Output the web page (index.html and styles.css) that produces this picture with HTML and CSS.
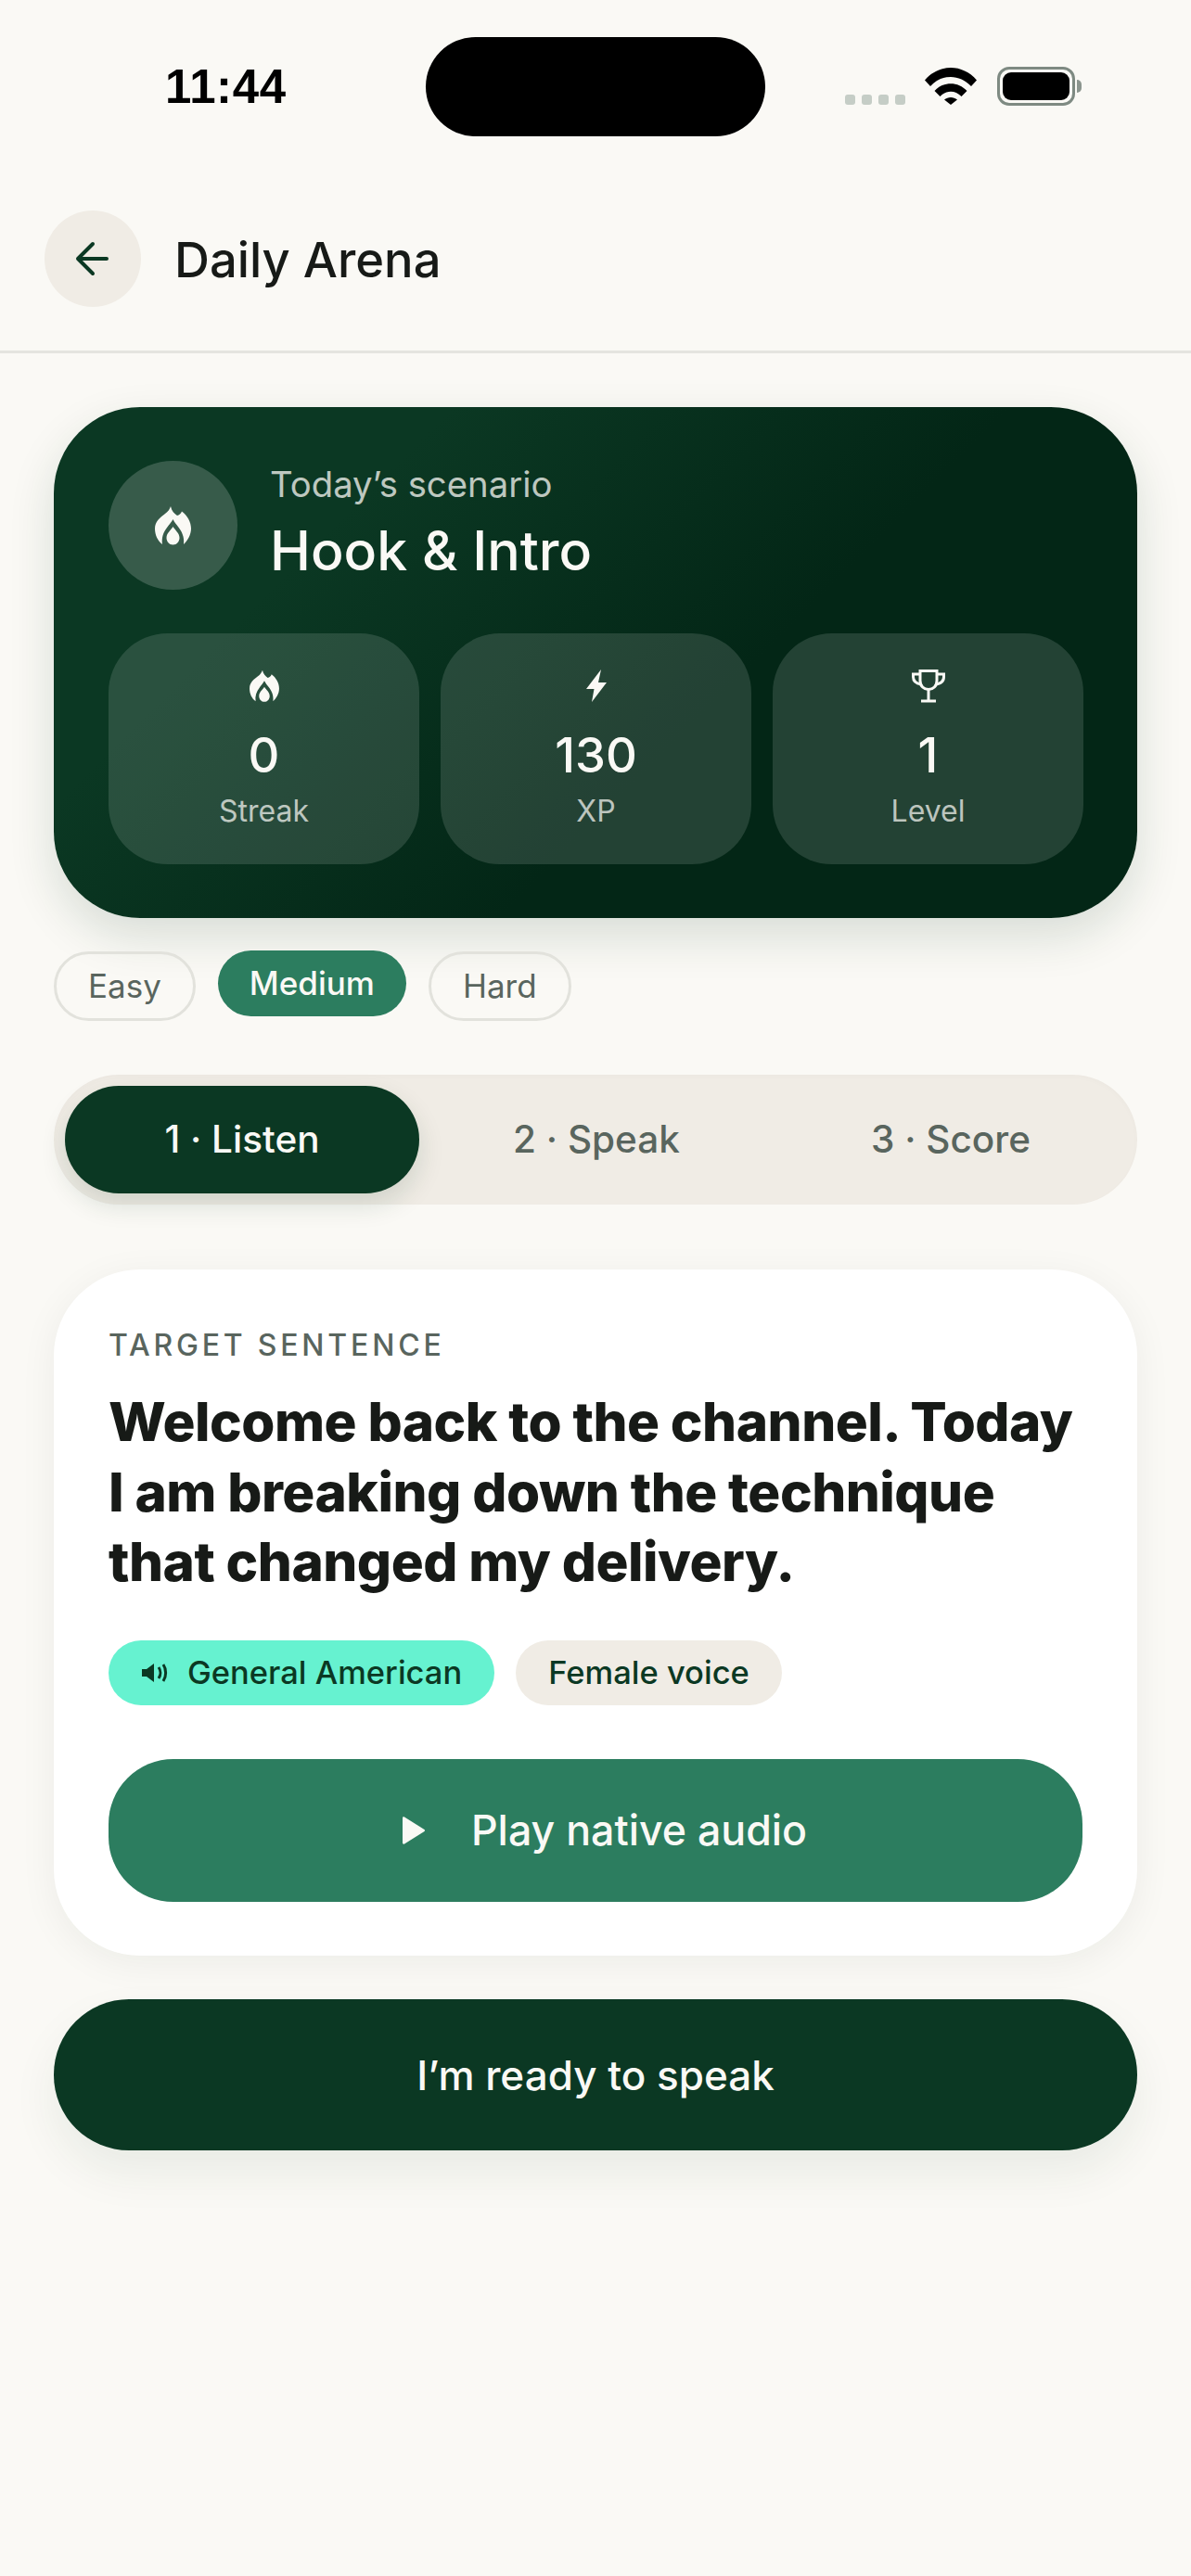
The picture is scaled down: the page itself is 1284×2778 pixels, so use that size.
FILE: index.html
```html
<!DOCTYPE html>
<html lang="en">
<head>
<meta charset="utf-8">
<title>Daily Arena</title>
<link rel="stylesheet" href="styles.css">
</head>
<body>
<div class="screen">
  <div class="status">
    <span class="time">11:44</span>
    <div class="island"></div>
    <div class="status-icons">
      <div class="dots"><i></i><i></i><i></i><i></i></div>
      <svg class="wifi" width="56" height="41" viewBox="0 0 56 41"><path d="M0 14.500C15 -3.500 41 -3.500 56 14.500L50 21C37.500 7.500 18.500 7.500 6 21Z"/><path d="M10.500 26C20 15.500 36 15.500 45.500 26L39.500 32C32.500 25 23.500 25 16.500 32Z"/><path d="M21 35.500C25 32 31 32 35 35.500L28 41Z"/></svg>
      <div class="battery"><div class="battery-fill"></div></div>
    </div>
  </div>
  <header class="topbar">
    <button class="back">
      <svg width="44" height="44" viewBox="0 0 44 44" fill="none" stroke="#0b3823" stroke-width="4" stroke-linecap="round" stroke-linejoin="round"><path d="M37 22H6M22 6L6 22L22 38"/></svg>
    </button>
    <h1 class="title">Daily Arena</h1>
  </header>
  <main class="content">
    <section class="hero">
      <div class="hero-head">
        <div class="hero-icon">
          <svg width="39" height="42" viewBox="0 0 39 42"><path class="flame" d="M17 0C18 5 21 8 24 10C26 9.500 28 8 29 5.500C35 10 39 17 39 24C39 31 35 37 31 41C32 33 29 27 25 22C23 19.500 21 17 19.500 14C18 17 15 20 13 23C9 28 7 34 8 41C3 37 0 31 0 24C0 16 6 12 11 8C14 6 16 3 17 0Z"/><path class="flame" d="M19.500 22C22 26 26.500 29 26.500 34C26.500 38 23.500 41.500 19.500 41.500C15.500 41.500 12.500 38 12.500 34C12.500 29 17 26 19.500 22Z"/></svg>
        </div>
        <div class="hero-text">
          <div class="hero-sub">Today’s scenario</div>
          <div class="hero-title">Hook &amp; Intro</div>
        </div>
      </div>
      <div class="stats">
        <div class="stat">
          <svg class="stat-icon" width="36" height="36" viewBox="-2 -1 43 44"><path class="flame" d="M17 0C18 5 21 8 24 10C26 9.500 28 8 29 5.500C35 10 39 17 39 24C39 31 35 37 31 41C32 33 29 27 25 22C23 19.500 21 17 19.500 14C18 17 15 20 13 23C9 28 7 34 8 41C3 37 0 31 0 24C0 16 6 12 11 8C14 6 16 3 17 0Z"/><path class="flame" d="M19.500 22C22 26 26.500 29 26.500 34C26.500 38 23.500 41.500 19.500 41.500C15.500 41.500 12.500 38 12.500 34C12.500 29 17 26 19.500 22Z"/></svg>
          <div class="stat-num">0</div>
          <div class="stat-label">Streak</div>
        </div>
        <div class="stat">
          <svg class="stat-icon" width="36" height="36" viewBox="0 0 36 36"><path class="flame" d="M23 0L7 21H15.500L13 35L29 14H20Z"/></svg>
          <div class="stat-num">130</div>
          <div class="stat-label">XP</div>
        </div>
        <div class="stat">
          <svg class="stat-icon" width="36" height="36" viewBox="0 0 36 36" fill="none" stroke="#faf9f5" stroke-width="3"><path d="M9 1.500H27V12C27 18 23 21.500 18 21.500C13 21.500 9 18 9 12Z"/><path d="M9 5H1.500V8C1.500 12 4 15 10 16M27 5H34.500V8C34.500 12 32 15 26 16M18 21.500V33M10 34H26"/></svg>
          <div class="stat-num">1</div>
          <div class="stat-label">Level</div>
        </div>
      </div>
    </section>
    <div class="levels">
      <span class="level">Easy</span>
      <span class="level level-on">Medium</span>
      <span class="level">Hard</span>
    </div>
    <nav class="steps">
      <div class="step step-on">1 · Listen</div>
      <div class="step">2 · Speak</div>
      <div class="step">3 · Score</div>
    </nav>
    <section class="card">
      <div class="card-label">TARGET SENTENCE</div>
      <p class="sentence">Welcome back to the channel. Today I am breaking down the technique that changed my delivery.</p>
      <div class="tags">
        <span class="tag tag-accent">
          <svg width="30" height="24" viewBox="0 0 30 24"><path fill="#0b3823" d="M1 8H6L14 2V22L6 16H1Z"/><path fill="none" stroke="#0b3823" stroke-width="3" d="M19 6C21.500 9.500 21.500 14.500 19 18M24 3C27.500 8 27.500 16 24 21"/></svg>
          General American
        </span>
        <span class="tag">Female voice</span>
      </div>
      <button class="play">
        <svg width="50" height="30" viewBox="0 0 50 30"><path fill="#faf9f5" d="M20 1.500C20 .5 21 0 22 .5L43.500 14C44.200 14.500 44.200 15.500 43.500 16L22 29.500C21 30 20 29.500 20 28.500Z"/></svg>
        <span>Play native audio</span>
      </button>
    </section>
    <button class="ready">I’m ready to speak</button>
  </main>
</div>
</body>
</html>
```
FILE: styles.css
```css
* { box-sizing: border-box; }
html, body { margin: 0; padding: 0; }
body {
  width: 1284px;
  height: 2778px;
  background: #faf9f5;
  font-family: "Inter", "Noto Sans", sans-serif;
  color: #171a17;
  overflow: hidden;
}
.screen { width: 1284px; height: 2778px; }

.status {
  height: 187px;
  padding: 40px 0 0 178px;
  display: flex;
  align-items: flex-start;
}
.time {
  width: 281px;
  margin-top: 28px;
  font-family: "Liberation Sans", sans-serif;
  font-size: 51px;
  line-height: 52px;
  font-weight: 700;
  letter-spacing: 0.600px;
  color: #000;
}
.island { width: 366px; height: 107px; border-radius: 54px; background: #000; }
.status-icons { margin: 31px 0 0 86px; display: flex; align-items: flex-end; height: 44px; }
.dots { display: flex; gap: 7px; margin-right: 21px; margin-bottom: 2px; }
.dots i { width: 11px; height: 11px; border-radius: 3px; background: #c5cdc6; display: block; }
.wifi { fill: #000; margin-right: 22px; margin-bottom: 2px; }
.battery {
  position: relative;
  width: 84px;
  height: 42px;
  border: 3px solid #7e8a82;
  border-radius: 13px;
  padding: 3px;
  margin-bottom: 1px;
}
.battery::after {
  content: "";
  position: absolute;
  right: -10px;
  top: 11px;
  width: 5px;
  height: 14px;
  background: #8b958e;
  border-radius: 0 5px 5px 0;
}
.battery-fill { width: 100%; height: 100%; border-radius: 9px; background: #000; }

.topbar {
  height: 194px;
  padding: 40px 48px 0;
  display: flex;
  align-items: flex-start;
  gap: 36px;
  border-bottom: 3px solid #e4e4df;
}
.back {
  width: 104px;
  height: 104px;
  border: 0;
  padding: 0;
  border-radius: 50%;
  background: #f0ece5;
  display: flex;
  align-items: center;
  justify-content: center;
}
.title {
  margin: 0;
  height: 104px;
  font-size: 52.500px;
  line-height: 106px;
  font-weight: 500;
  color: #171a17;
}

.content { padding: 58px 58px 0; }

.hero {
  height: 551px;
  padding: 58px 59px;
  border-radius: 93px;
  background: linear-gradient(135deg, #0b3823 25%, #032616 60%);
  box-shadow: 0 20px 50px rgba(11, 56, 35, 0.14);
}
.hero-head { display: flex; gap: 35px; align-items: center; height: 139px; }
.hero-icon {
  width: 139px;
  height: 139px;
  border-radius: 50%;
  background: rgba(255, 255, 255, 0.18);
  display: flex;
  align-items: center;
  justify-content: center;
}
.flame { fill: #faf9f5; }
.hero-sub { font-size: 38.300px; line-height: 52px; color: rgba(250, 249, 245, 0.75); margin-top: -7px; }
.hero-title { font-size: 59px; line-height: 72px; font-weight: 500; color: #faf9f5; margin-top: 10px; }
.stats { display: grid; grid-template-columns: repeat(3, 335px); gap: 23px; margin-top: 47px; }
.stat {
  height: 249px;
  border-radius: 64px;
  background: rgba(255, 255, 255, 0.13);
  padding-top: 39px;
  display: flex;
  flex-direction: column;
  align-items: center;
  color: #faf9f5;
}
.stat-num { font-size: 52.500px; line-height: 62px; font-weight: 500; margin-top: 25px; }
.stat-label { font-size: 32px; line-height: 44px; color: rgba(250, 249, 245, 0.72); margin-top: 8px; }

.levels { display: flex; gap: 24px; margin-top: 35px; align-items: flex-start; }
.level {
  height: 75px;
  padding: 0 34px;
  border: 3px solid #e2e2dc;
  border-radius: 38px;
  font-size: 35px;
  line-height: 69px;
  color: #59655e;
  margin-top: 1px;
}
.level-on {
  height: 71px;
  line-height: 70px;
  border: 0;
  margin-top: 0;
  background: #2c7d5f;
  color: #faf9f5;
  font-weight: 500;
}

.steps {
  height: 140px;
  margin-top: 58px;
  padding: 12px;
  border-radius: 70px;
  background: #f0ece5;
  display: grid;
  grid-template-columns: repeat(3, 382px);
  gap: 0;
  box-shadow: inset 0 2px 6px rgba(0, 0, 0, 0.02);
}
.step {
  height: 116px;
  line-height: 116px;
  text-align: center;
  font-size: 40.500px;
  font-weight: 500;
  color: #59655e;
  border-radius: 58px;
}
.step-on {
  background: #0b3823;
  color: #faf9f5;
  box-shadow: 0 12px 28px rgba(11, 56, 35, 0.14);
}

.card {
  height: 740px;
  margin-top: 70px;
  padding: 62px 59px 0;
  border-radius: 93px;
  background: #fff;
  box-shadow: 0 8px 40px rgba(23, 26, 23, 0.06);
}
.card-label {
  font-size: 32px;
  line-height: 40px;
  font-weight: 500;
  letter-spacing: 3.800px;
  color: #59655e;
}
.sentence {
  margin: 24px 0 0;
  font-size: 58.400px;
  line-height: 75.500px;
  font-weight: 800;
  letter-spacing: -0.500px;
  color: #171a17;
}
.tags { display: flex; gap: 23px; margin-top: 47px; }
.tag {
  height: 70px;
  padding: 0 35px;
  border-radius: 35px;
  background: #f0ece5;
  font-size: 34.500px;
  font-weight: 500;
  line-height: 70px;
  color: #0b3823;
  display: inline-flex;
  align-items: center;
  gap: 20px;
}
.tag-accent { background: #66f2d0; }
.play {
  width: 1050px;
  height: 154px;
  margin-top: 58px;
  border: 0;
  border-radius: 70px;
  background: #2c7d5f;
  color: #faf9f5;
  font-family: inherit;
  font-size: 44.700px;
  font-weight: 500;
  display: flex;
  align-items: center;
  justify-content: center;
  gap: 44px;
}
.ready {
  display: block;
  width: 1168px;
  height: 163px;
  margin-top: 47px;
  border: 0;
  border-radius: 81px;
  background: #0b3823;
  color: #faf9f5;
  font-family: inherit;
  font-size: 44px;
  font-weight: 500;
  box-shadow: 0 24px 50px rgba(11, 56, 35, 0.07);
}
```
